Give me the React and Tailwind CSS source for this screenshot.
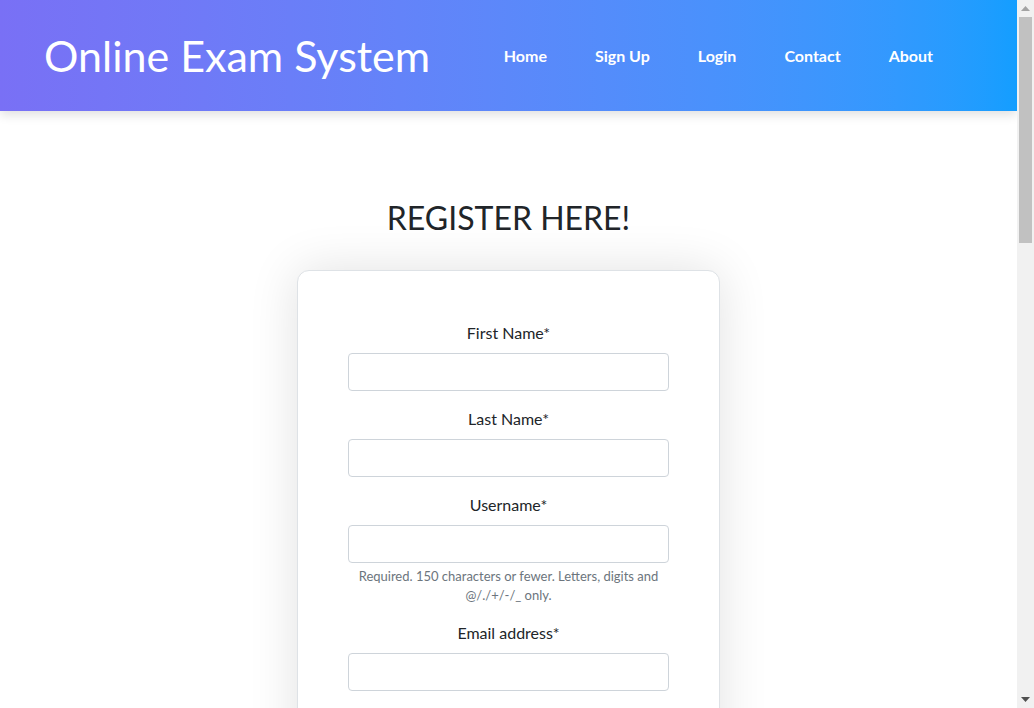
import React from 'react';

const navLinks = ['Home', 'Sign Up', 'Login', 'Contact', 'About'];

const fields = [
  { label: 'First Name*', type: 'text' },
  { label: 'Last Name*', type: 'text' },
  {
    label: 'Username*',
    type: 'text',
    help: 'Required. 150 characters or fewer. Letters, digits and @/./+/-/_ only.',
  },
  { label: 'Email address*', type: 'email' },
  {
    label: 'Password*',
    type: 'password',
    help: "Your password can't be too similar to your other personal information. Your password must contain at least 8 characters.",
  },
  {
    label: 'Password confirmation*',
    type: 'password',
    help: 'Enter the same password as before, for verification.',
  },
];

const Field = ({ label, type, help }) => (
  <div className="flex flex-col items-center mb-4">
    <label className="text-base leading-6 text-[#212529] mb-2">{label}</label>
    <input
      type={type}
      className="w-full h-[38px] px-3 border border-[#ced4da] rounded bg-white outline-none"
    />
    {help && (
      <p className="mt-1 text-[13px] leading-[19px] text-[#6c757d] text-center">
        {help}
      </p>
    )}
  </div>
);

// classic browser scrollbar, as seen in the screenshot
const Scrollbar = () => (
  <aside className="sticky top-0 self-start w-[17px] h-[708px] flex flex-col bg-[#f1f1f1]">
    <div className="h-[17px] flex items-center justify-center">
      <svg width="9" height="5" viewBox="0 0 9 5">
        <path d="M4.5 0 L9 5 L0 5 Z" fill="#a3a3a3" />
      </svg>
    </div>
    <div className="h-[226px] mx-[2px] bg-[#c1c1c1]" />
    <div className="flex-1" />
    <div className="h-[17px] flex items-center justify-center">
      <svg width="9" height="5" viewBox="0 0 9 5">
        <path d="M0 0 L9 0 L4.5 5 Z" fill="#505050" />
      </svg>
    </div>
  </aside>
);

const App = () => {
  return (
    <div className="flex bg-white font-['Lato','Open_Sans',sans-serif]">
      <div className="w-[1017px] min-h-[2100px]">
        {/* Header */}
        <header className="h-[111px] flex items-center justify-between pl-[44px] pr-[60px] bg-gradient-to-r from-[#7970f5] to-[#139eff] shadow-[0_4px_10px_rgba(0,0,0,0.12)]">
          <h1 className="text-[43px] leading-[1.2] text-white">Online Exam System</h1>
          <nav className="flex items-center">
            {navLinks.map((link) => (
              <a
                key={link}
                href="#"
                className="px-6 text-base font-bold text-white leading-6"
              >
                {link}
              </a>
            ))}
          </nav>
        </header>

        {/* Register form */}
        <main className="flex flex-col items-center pt-[88px]">
          <h2 className="text-[32px] leading-[1.2] text-[#212529] mb-[33px]">
            REGISTER HERE!
          </h2>
          <div className="w-[423px] border border-[#dee2e6] rounded-xl bg-white px-[50px] pt-[50px] pb-[40px] shadow-[0_0_50px_rgba(0,0,0,0.12)]">
            <form>
              {fields.map((field) => (
                <Field key={field.label} {...field} />
              ))}
              <div className="flex justify-center pt-2">
                <button
                  type="button"
                  className="px-6 py-2 rounded bg-[#0d6efd] text-white text-base"
                >
                  Register
                </button>
              </div>
            </form>
          </div>
        </main>
      </div>
      <Scrollbar />
    </div>
  );
};

export default App;
